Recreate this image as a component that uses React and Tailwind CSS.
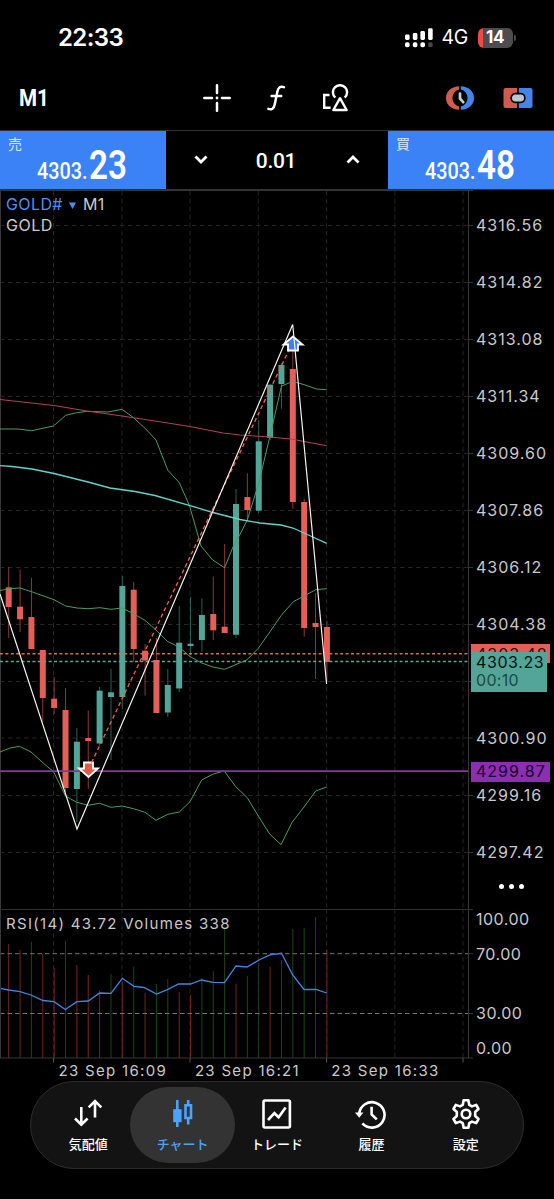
import React from 'react';

// [direction, high, body top, body bottom, low]
const CANDLES = [
  ['d', 567, 587.3, 607, 638],
  ['d', 569.7, 606.7, 619.3, 632],
  ['d', 577.7, 617, 649, 649],
  ['d', 650, 650, 698, 722],
  ['d', 677, 698.7, 708, 714],
  ['d', 688, 710, 788, 796],
  ['u', 728, 741.7, 789, 822],
  ['d', 710.7, 738, 741, 789],
  ['u', 687, 690.7, 743.5, 746],
  ['u', 669, 692.3, 697, 760],
  ['u', 576, 586, 697, 709],
  ['d', 582, 589.7, 649, 662],
  ['d', 644, 650.7, 660.5, 695.7],
  ['d', 638, 660, 713, 713],
  ['u', 669, 685, 712.5, 717],
  ['u', 606, 642.7, 688.5, 692],
  ['u', 597, 643.7, 646, 655],
  ['u', 598.7, 615, 640, 651.7],
  ['d', 576.7, 614, 630.3, 640],
  ['d', 544, 626.7, 633, 633],
  ['u', 489, 504, 634.7, 638],
  ['d', 473.3, 497, 510, 521],
  ['u', 420, 441.3, 510.7, 513],
  ['u', 384, 384.7, 438, 440],
  ['u', 363, 365, 384, 408.7],
  ['d', 351, 369, 502, 508.7],
  ['d', 498.7, 502, 628, 636.7],
  ['d', 593, 623, 627, 679],
  ['d', 620.7, 627, 662, 682],
];

const VOLUMES = [
  ['d', 944], ['d', 950], ['u', 941.7], ['d', 954], ['d', 968], ['u', 941],
  ['d', 965], ['d', 975], ['d', 990.7], ['u', 974], ['d', 982], ['u', 966.7],
  ['d', 992.7], ['u', 984], ['u', 979], ['d', 992], ['d', 995], ['u', 978],
  ['u', 971], ['u', 929], ['d', 983.7], ['u', 976], ['u', 963], ['d', 966.7],
  ['u', 960], ['u', 929], ['u', 928], ['u', 917], ['d', 950],
];

const BAND_UPPER =
  '0,429 18,429 31.7,430.7 53.5,426 65.7,415.3 76.7,412.7 87.3,411.3 108,412 122,409.3 133.5,417.7 145.5,428.7 156,440 167.7,470 179.3,482.7 189.5,505.7 201,546 212.7,560 224.6,567.7 233,547 240.7,533 247.3,520 258.5,484 270,436 281.5,386 292.7,381.5 303,384.3 316.5,389 326.7,389.7';
const BAND_MIDDLE =
  '0,590.5 10,588.5 20,588 31.5,591.7 54,599.7 65.7,606 77,608 88,608.7 100,607.7 111,609.3 122,608 133.5,613.7 145,620.3 156,630 167.7,641.5 179,647 190,656.5 201.7,663 213,667 224.5,669.4 246.7,660 258.3,648.3 270,631.7 281,615.7 293.3,601.7 304,596 315.7,589.7 326.7,588.7';
const BAND_LOWER =
  '0,752 10,748 19.5,746.3 31,752 43.5,763.3 53.5,771.7 65.5,796 76.7,802.3 88.3,805.3 99.7,803.3 111,807.3 122,806 133.5,808.7 145,812.3 156,820.3 167.7,814.3 179.3,812 190,801.7 201.7,780 213.3,774 224.3,771 235.7,786.7 247.3,797.7 258.3,816 269.7,834 281,844.7 292.3,822 304,807 315.7,791 326.7,787';
const MA_SLOW = '0,399.5 54,405.5 87,411 122,416 155,421 190,426.5 223,433 240,435 270,437 292.7,439.3 326.7,445.7';
const MA_FAST =
  '0,465.7 12,466.5 32,469 54,473.5 88,482 110,488 135,491.5 155,495.5 190,505.5 213,512.5 240,519.5 260,523 281,525 293,528 315,538 326.7,543.3';
const RSI_LINE =
  '0,988.3 8.6,990 20,991.7 31,995 43,1000.5 54,1001.7 65.3,1009.5 77,1001.7 88.3,1001 99.7,993 111,993.3 122.3,978.3 134,986.3 144,987.5 156.5,994 167.5,989.7 178.5,984 190.5,984 201.5,980 213,982.3 224.5,982.7 236,966 247,967 259,960 270,954.8 281.5,953.3 292.7,975 304,989.5 316,989.5 326.7,993';

const GRID_X = [53.5, 122, 190, 258.3, 326.6, 394.8, 463];
const GRID_Y = [225.5, 282.5, 339.5, 396.5, 453.5, 510.5, 567.5, 624.5, 681.5, 738, 795.5, 852.5];
const PRICES = [
  '4316.56', '4314.82', '4313.08', '4311.34', '4309.60', '4307.86',
  '4306.12', '4304.38', '', '4300.90', '4299.16', '4297.42',
];

const barX = (i) => 8.7 + i * 11.365;

const PricePane = () => (
  <svg width="473" height="719" viewBox="0 190 473 719" fill="none" className="block">
    <g stroke="#242428" strokeWidth="1" strokeDasharray="4.5 3.5">
      {GRID_X.map((x) => <path key={x} d={`M${x} 191V909`} />)}
      {GRID_Y.map((y) => <path key={y} d={`M0 ${y}H468`} />)}
    </g>
    <g stroke="#363638">
      <path d="M0 190.5H554M0.5 190V909M468.5 190V909" />
      {GRID_Y.map((y) => <path key={y} d={`M469 ${y}H473`} />)}
    </g>

    {CANDLES.map(([dir, high, top, bottom, low], i) => (
      <g key={i}>
        <path d={`M${barX(i)} ${high}V${low}`} stroke={dir === 'u' ? '#2a5f57' : '#8a3a35'} />
        <rect x={barX(i) - 3} y={top} width="6" height={bottom - top} fill={dir === 'u' ? '#53a598' : '#e45f58'} />
      </g>
    ))}

    <polyline points={BAND_UPPER} stroke="#4c9a62" />
    <polyline points={BAND_MIDDLE} stroke="#4c9a62" />
    <polyline points={BAND_LOWER} stroke="#4c9a62" />
    <polyline points={MA_SLOW} stroke="#ad4063" strokeWidth="1.1" />
    <polyline points={MA_FAST} stroke="#62d3c8" strokeWidth="1.3" />

    <path d="M0 653.7H468" stroke="#e9635c" strokeWidth="1.6" strokeDasharray="3 2.4" />
    <path d="M0 661.5H468" stroke="#58a89a" strokeWidth="1.6" strokeDasharray="3 2.4" />
    <path d="M0 771.2H468" stroke="#8537a0" strokeWidth="1.8" />

    {/* deal markers and the line that joins them */}
    <path d="M84 762.5H93V768.5H98L88.5 777L79 768.5H84Z" fill="#e8554c" stroke="#fff" strokeWidth="1.8" />
    <path d="M88.5 769L292.8 342" stroke="#f0604f" strokeWidth="1.3" strokeDasharray="4 3" />
    <path d="M288 350.5H298V344.5H302.5L293 336.5L283.5 344.5H288Z" fill="#3f7ff0" stroke="#fff" strokeWidth="1.8" />
    <polyline points="0,594 77,829 292.7,324.5 326.6,684" stroke="#f4f4ea" strokeWidth="1.2" />
  </svg>
);

const RsiPane = () => (
  <svg width="473" height="154" viewBox="0 909 473 154" fill="none" className="block">
    <g stroke="#242428" strokeDasharray="4.5 3.5">
      {GRID_X.map((x) => <path key={x} d={`M${x} 909V1058`} />)}
    </g>
    {VOLUMES.map(([dir, top], i) => (
      <path key={i} d={`M${barX(i)} ${top}V1058`} stroke={dir === 'u' ? '#1a451a' : '#74241f'} />
    ))}
    <path d="M0 953.7H468M0 1013.5H468" stroke="#747474" strokeDasharray="4.5 3" />
    <polyline points={RSI_LINE} stroke="#4585e0" strokeWidth="1.3" />
    <g stroke="#363638">
      <path d="M0 909.4H473M0.5 909V1058M468.5 909V1058M0 1058H473M469 953.7H473M469 1013.5H473" />
      <path d="M53.5 1058V1062.5M190 1058V1062.5M326.6 1058V1062.5M463 1058V1062.5" stroke="#555" />
    </g>
  </svg>
);

const StatusBar = () => (
  <div className="flex h-[74px] items-center pl-[58px] pr-[38px] pt-px font-['Inter']">
    <span className="text-[24px] font-semibold tracking-[-0.6px]">22:33</span>
    <svg width="28" height="20" viewBox="0 0 28 20" fill="#fff" className="ml-auto">
      <rect x="0" y="6.5" width="4.6" height="5.5" rx="1.4" />
      <rect x="7.8" y="5" width="4.6" height="7" rx="1.4" />
      <rect x="15.4" y="3" width="4.6" height="9" rx="1.4" />
      <rect x="23.1" y="0.3" width="4.6" height="11.7" rx="1.4" />
      <rect x="0" y="14.3" width="4.6" height="5" rx="1.8" />
      <rect x="7.8" y="14.3" width="4.6" height="5" rx="1.8" />
      <rect x="15.4" y="14.3" width="4.6" height="5" rx="1.8" />
      <rect x="23.1" y="14.3" width="4.6" height="5" rx="1.8" fill="#48484a" />
    </svg>
    <span className="ml-[9px] w-[27px] text-[19.5px] tracking-[-0.3px]">4G</span>
    <div className="ml-[9px] flex h-5 w-[35px] items-center justify-center rounded-[6px] bg-gradient-to-r from-[#eb4d46] from-15% to-[#4d4d4f] to-15% text-[17px] font-bold tracking-[-0.5px]">
      14
    </div>
    <div className="ml-[1.5px] h-[6px] w-[2px] rounded-r-full bg-[#4d4d4f]" />
  </div>
);

const Toolbar = () => (
  <div className="flex h-[56px] items-center pl-[19px] pr-[21px] pb-2">
    <span className="w-[184px] pb-px font-['Roboto']">
      <span className="inline-block origin-left scale-x-[0.86] text-[24px] font-bold">M1</span>
    </span>
    <svg width="28" height="28" viewBox="0 0 28 28" stroke="#fff" strokeWidth="2.5" strokeLinecap="round" fill="none">
      <path d="M14 1.3V9M14 19V26.7M1.3 14H9M19 14H26.7" />
      <circle cx="14" cy="14" r="1.4" fill="#fff" stroke="none" />
    </svg>
    <svg width="20" height="28" viewBox="0 0 20 28" stroke="#fff" strokeWidth="2.5" strokeLinecap="round" fill="none" className="ml-[35px]">
      <path d="M18 3.2C14.6 1.8 12.3 3.4 11.4 7.6L8.7 20.4C7.9 24.6 5.6 26.1 2.4 24.9M5.6 12H15.2" />
    </svg>
    <svg width="28" height="28" viewBox="0 0 28 28" stroke="#fff" strokeWidth="2.4" fill="none" className="ml-[36px]">
      <path d="M7.5 11H2.2V23.8H8.6" />
      <path d="M13.3 13.6A7.1 7.1 0 1 1 22.7 13.6" />
      <path d="M18 14.2L11.4 26H24.6Z" strokeLinejoin="round" />
    </svg>
    <svg width="30" height="26" viewBox="0 0 30 26" fill="none" className="ml-auto">
      <path d="M14.2 1.2V4.6A8.6 8.6 0 0 0 14.2 21.4V24.8C6.8 24.8 1 19.8 1 13S6.8 1.2 14.2 1.2Z" fill="#cf5c4c" />
      <path d="M15.8 1.2V4.6A8.6 8.6 0 0 1 15.8 21.4V24.8C23.2 24.8 29 19.8 29 13S23.2 1.2 15.8 1.2Z" fill="#4584ea" />
      <path d="M15 8.6V13.6L18.2 17.2" stroke="#c2cdd2" strokeWidth="2.7" strokeLinecap="round" strokeLinejoin="round" />
    </svg>
    <svg width="30" height="22" viewBox="0 0 30 22" className="ml-7">
      <path d="M2.5 0.9H14.2V21H2.5A2 2 0 0 1 0.5 19V2.9A2 2 0 0 1 2.5 0.9Z" fill="#cf5c4c" />
      <path d="M15.8 0.9H27.5A2 2 0 0 1 29.5 2.9V19A2 2 0 0 1 27.5 21H15.8Z" fill="#4584ea" />
      <rect x="8.2" y="6.7" width="13.6" height="8.6" rx="4" fill="#b9c8cf" stroke="#000" strokeWidth="1.7" />
    </svg>
  </div>
);

const PriceButton = ({ label, whole, pips }) => (
  <div className="relative h-full w-[166px] bg-[#3b82f6]">
    <span className="absolute left-2 top-0.5 font-['Noto_Sans_CJK_JP',sans-serif] text-[14px] leading-5 text-[#dbe8ff]">{label}</span>
    <div className="flex h-full items-baseline pl-[37px] pt-[11px] font-['Roboto'] leading-[48px]">
      <span className="w-[52px] origin-left scale-x-[0.86] text-[23px] font-medium">{whole}</span>
      <span className="origin-left scale-x-[0.83] text-[40px] font-semibold">{pips}</span>
    </div>
  </div>
);

const TradeBar = () => (
  <div className="flex h-[60px] items-center border-y border-[#303032]">
    <PriceButton label="売" whole="4303." pips="23" />
    <div className="flex flex-1 items-center justify-between px-7">
      <svg width="14" height="10" viewBox="0 0 14 10" fill="none" stroke="#fff" strokeWidth="2.8">
        <path d="M1.5 1.5L7 7L12.5 1.5" />
      </svg>
      <span className="pt-[3px] pr-0.5 font-['Roboto'] text-[21px] font-medium tracking-[-0.3px]">0.01</span>
      <svg width="14" height="10" viewBox="0 0 14 10" fill="none" stroke="#fff" strokeWidth="2.8">
        <path d="M1.5 7.5L7 2L12.5 7.5" />
      </svg>
    </div>
    <PriceButton label="買" whole="4303." pips="48" />
  </div>
);

const PriceAxis = () => (
  <div className="relative flex-1 pt-[6px] text-[16px] tracking-[1px] text-[#c9c9c9]">
    {PRICES.map((price, i) => (
      <div key={i} className="flex h-[57px] items-center pl-[3px]">{price}</div>
    ))}
    <div className="absolute -left-[2px] top-[453.5px] h-[19.5px] w-[79px] bg-[#e45f58] pl-[5px] leading-[20px] text-[#2b0f0e]">4303.48</div>
    <div className="absolute -left-[2px] top-[462px] h-[40px] w-[76px] bg-[#53a598] pl-[5px] leading-[20px] tracking-[0.6px] text-[#04110f]">
      4303.23
      <div className="leading-[17px] tracking-[0.3px] text-[#1d4a42]">00:10</div>
    </div>
    <div className="absolute -left-[2px] top-[571.5px] h-[20px] w-[79px] bg-[#8d2db3] pl-[5px] leading-[19px] text-[#16041d]">4299.87</div>
    <div className="absolute left-[26px] top-[694px] flex gap-[5px]">
      <i className="size-[5px] rounded-full bg-white" />
      <i className="size-[5px] rounded-full bg-white" />
      <i className="size-[5px] rounded-full bg-white" />
    </div>
  </div>
);

const Chart = () => (
  <div className="font-['Inter']">
    <div className="relative flex">
      <PricePane />
      <div className="absolute left-[6px] top-1 text-[16px] leading-[21px] text-[#c9c9c9]">
        <div className="flex items-center">
          <span className="tracking-[0.4px] text-[#4a90f5]">GOLD#</span>
          <svg width="7" height="7" viewBox="0 0 7 7" fill="#4a90f5" className="ml-[6px] mr-[7px] mt-0.5">
            <path d="M0 0.5H7L3.5 7Z" />
          </svg>
          <span className="tracking-[0.4px]">M1</span>
        </div>
        <span className="tracking-[0.5px]">GOLD</span>
      </div>
      <PriceAxis />
    </div>
    <div className="relative flex text-[#c9c9c9]">
      <RsiPane />
      <div className="absolute left-[6px] top-1 text-[15px] leading-[21px] tracking-[1.32px]">RSI(14) 43.72 Volumes 338</div>
      <div className="flex h-[149px] flex-1 flex-col pl-[3px] text-[16px] leading-5 tracking-[0.5px]">
        <span>100.00</span>
        <span className="mt-[15px]">70.00</span>
        <span className="mt-[39px]">30.00</span>
        <span className="mt-[15px]">0.00</span>
      </div>
    </div>
    <div className="flex h-4 pl-[58.5px] text-[15px] leading-4 tracking-[1.3px] text-[#c9c9c9]">
      <span className="w-[136.4px]">23 Sep 16:09</span>
      <span className="w-[136.4px]">23 Sep 16:21</span>
      <span>23 Sep 16:33</span>
    </div>
  </div>
);

const NAV_ITEMS = [
  {
    label: '気配値',
    icon: <path d="M9.3 9V26M3 20.5L9.3 26.7L15.6 20.5M23 19.5V3M16.7 9.3L23 3L29.3 9.3" />,
  },
  {
    label: 'チャート',
    active: true,
    icon: (
      <g>
        <path d="M10.3 2V29M21.2 2V6M21.2 21V26.5" />
        <path d="M6.2 11.2H14.6V24.2H6.2Z" fill="currentColor" stroke="none" />
        <path d="M18.5 7.3H24V20H18.5Z" />
      </g>
    ),
  },
  {
    label: 'トレード',
    icon: (
      <g>
        <rect x="2.5" y="2.5" width="26.4" height="27" rx="1.5" />
        <path d="M7 22L13.4 15.2L17.6 19.3L24.6 9.6" />
      </g>
    ),
  },
  {
    label: '履歴',
    icon: (
      <g>
        <path d="M4.2 15.8A12.7 12.7 0 1 1 7.4 25.4" />
        <path d="M0 14.6H8.4L4.2 19.8Z" fill="currentColor" stroke="none" />
        <path d="M16.6 8.8V16.4L21.8 21.4" />
      </g>
    ),
  },
  {
    label: '設定',
    icon: (
      <g strokeLinejoin="round">
        <circle cx="16" cy="16" r="4.3" />
        <path d="M13.6 2.2H18.4L19.2 6.8L22 8.4L26.2 6.9L28.5 11L25.2 13.9V18.1L28.5 21L26.2 25.1L22 23.6L19.2 25.2L18.4 29.8H13.6L12.8 25.2L10 23.6L5.8 25.1L3.5 21L6.8 18.1V13.9L3.5 11L5.8 6.9L10 8.4L12.8 6.8Z" />
      </g>
    ),
  },
];

const BottomNav = () => (
  <nav className="mx-[30px] mt-[2px] flex h-[88px] rounded-[44px] border border-[#2c2c2c] bg-[#131313] px-[10px] font-['Noto_Sans_CJK_JP',sans-serif]">
    {NAV_ITEMS.map((item) => (
      <div
        key={item.label}
        className={`relative flex flex-1 flex-col items-center pt-[16px] ${item.active ? 'text-[#4aa3ff]' : 'text-white'}`}
      >
        {item.active && <div className="absolute -left-[5px] -right-[5px] top-[5px] h-[76px] rounded-[38px] bg-[#333]" />}
        <svg width="32" height="32" viewBox="0 0 32 32" fill="none" stroke="currentColor" strokeWidth="2.6" className="relative">
          {item.icon}
        </svg>
        <span className="relative mt-1 whitespace-nowrap text-[13px] font-medium leading-5">{item.label}</span>
      </div>
    ))}
  </nav>
);

const App = () => (
  <div className="h-[1199px] w-[554px] overflow-hidden bg-black text-white">
    <StatusBar />
    <Toolbar />
    <TradeBar />
    <Chart />
    <BottomNav />
  </div>
);

export default App;
